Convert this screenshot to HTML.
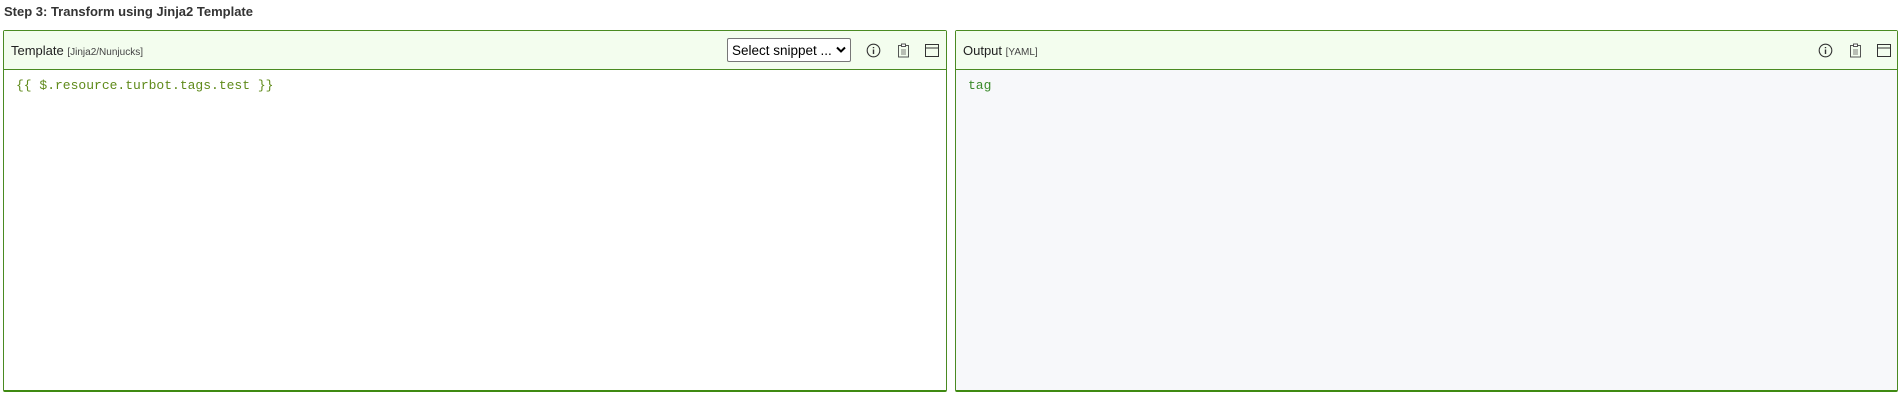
<!DOCTYPE html>
<html><head><meta charset="utf-8"><style>
*{box-sizing:border-box;margin:0;padding:0}
body{width:1903px;height:401px;background:#fff;font-family:"Liberation Sans",sans-serif;color:#222;position:relative;overflow:hidden}
.title{position:absolute;left:4px;top:4px;font-size:13px;font-weight:bold;color:#333}
.panel{position:absolute;top:30px;height:362px;border:1px solid #4a8a22;border-bottom:2px solid #3f8a12;border-radius:2px}
.hdr{height:39px;background:#f3fdee;border-bottom:1px solid #4a8a22;position:relative}
.hdr .t{position:absolute;left:7px;top:12px;font-size:13px;color:#222}
.hdr .t small{font-size:10px;color:#444}
.code{font-family:"Liberation Mono",monospace;font-size:13px;padding:8px 12px}
.sel{position:absolute;top:7px;width:124px;height:24px;border:1px solid #777;border-radius:2px;background:#fff;font-size:13.5px;padding:4px 4px;color:#000}
.sel svg{position:absolute;right:4px;top:7px}
.ic{position:absolute;top:12px}
</style></head><body>
<div class="title">Step 3: Transform using Jinja2 Template</div>
<div class="panel" style="left:3px;width:944px">
 <div class="hdr"><div class="t">Template <small>[Jinja2/Nunjucks]</small></div>
  <div class="sel" style="left:723px">Select snippet ...<svg width="10" height="8" viewBox="0 0 10 8"><path d="M1 1.5L5 5.5L9 1.5" stroke="#000" stroke-width="2" fill="none"/></svg></div>
  <svg class="ic" style="left:862px" width="15" height="15" viewBox="0 0 15 15"><circle cx="7.5" cy="7.5" r="6.3" stroke="#333" stroke-width="1.1" fill="none"/><path d="M7.5 6.5v4.5M7.5 4v1.2" stroke="#333" stroke-width="1.4"/></svg>
  <svg class="ic" style="left:893px" width="13" height="15" viewBox="0 0 13 15"><rect x="1.5" y="2.5" width="10" height="11.5" stroke="#444" stroke-width="0.9" fill="none"/><rect x="4.5" y="1" width="4" height="2.5" stroke="#444" stroke-width="0.9" fill="#fff"/><path d="M4 7h5M4 9h5M4 11h5" stroke="#555" stroke-width="0.8"/></svg>
  <svg class="ic" style="left:920px" width="16" height="15" viewBox="0 0 16 15"><rect x="1.5" y="1.5" width="13" height="12" stroke="#333" fill="none"/><path d="M1.5 5h13" stroke="#333"/></svg>
 </div>
 <div class="code" style="color:#5f8a1a">{{ $.resource.turbot.tags.test }}</div>
</div>
<div class="panel" style="left:955px;width:943px;background:#f7f8fa">
 <div class="hdr"><div class="t">Output <small>[YAML]</small></div>
  <svg class="ic" style="left:862px" width="15" height="15" viewBox="0 0 15 15"><circle cx="7.5" cy="7.5" r="6.3" stroke="#333" stroke-width="1.1" fill="none"/><path d="M7.5 6.5v4.5M7.5 4v1.2" stroke="#333" stroke-width="1.4"/></svg>
  <svg class="ic" style="left:893px" width="13" height="15" viewBox="0 0 13 15"><rect x="1.5" y="2.5" width="10" height="11.5" stroke="#444" stroke-width="0.9" fill="none"/><rect x="4.5" y="1" width="4" height="2.5" stroke="#444" stroke-width="0.9" fill="#fff"/><path d="M4 7h5M4 9h5M4 11h5" stroke="#555" stroke-width="0.8"/></svg>
  <svg class="ic" style="left:920px" width="16" height="15" viewBox="0 0 16 15"><rect x="1.5" y="1.5" width="13" height="12" stroke="#333" fill="none"/><path d="M1.5 5h13" stroke="#333"/></svg>
 </div>
 <div class="code" style="color:#3a8a2a">tag</div>
</div>
</body></html>
